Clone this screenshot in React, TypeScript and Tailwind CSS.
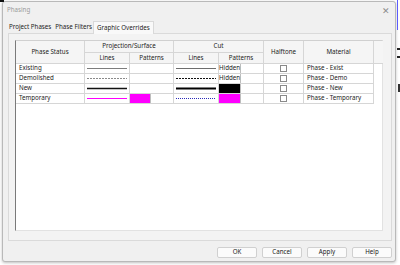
import React from 'react';

type Line = { color: string; width: number; dash?: string };

interface PhaseRow {
  name: string;
  projLine: Line;
  projFill?: string;
  cutLine: Line;
  cutPattern: { text?: string; fill?: string };
  material: string;
}

const rows: PhaseRow[] = [
  {
    name: 'Existing',
    projLine: { color: '#7d7d7d', width: 1 },
    cutLine: { color: '#6e6e6e', width: 1 },
    cutPattern: { text: 'Hidden' },
    material: 'Phase - Exist',
  },
  {
    name: 'Demolished',
    projLine: { color: '#8a8a8a', width: 1, dash: '2 1' },
    cutLine: { color: '#111', width: 1, dash: '2 1' },
    cutPattern: { text: 'Hidden' },
    material: 'Phase - Demo',
  },
  {
    name: 'New',
    projLine: { color: '#111', width: 1.3 },
    cutLine: { color: '#000', width: 2 },
    cutPattern: { fill: '#000' },
    material: 'Phase - New',
  },
  {
    name: 'Temporary',
    projLine: { color: '#ff00ff', width: 1 },
    projFill: '#ff00ff',
    cutLine: { color: '#2b2bb8', width: 1, dash: '1 1' },
    cutPattern: { fill: '#ff00ff' },
    material: 'Phase - Temporary',
  },
];

function LineSample({ line }: { line: Line }) {
  return (
    <svg width="41" height="9" className="block">
      <line x1="0" y1="4.5" x2="41" y2="4.5" stroke={line.color} strokeWidth={line.width} strokeDasharray={line.dash} />
    </svg>
  );
}

const cell = 'border-r border-b border-[#d6d6d6]';
const head = `${cell} bg-[#f5f5f5] flex items-center justify-center text-[#222]`;

export default function App() {
  return (
    <div className="w-[400px] h-[265px] bg-white relative overflow-hidden font-['Noto_Sans',sans-serif] text-[6.2px] leading-none whitespace-nowrap">
      {/* bits of the window behind */}
      <div className="absolute right-[2px] top-0 w-px h-[30px] bg-[#5b5bff]" />
      <div className="absolute right-0 top-[48px] w-[3px] h-[10px] border-y-2 border-[#222]" />
      <div className="absolute right-0 top-[84px] w-[2px] h-[8px] bg-[#333]" />
      <div className="absolute left-0 top-0 w-[4px] h-[2px] bg-[#111]" />

      <div className="ml-[2px] mt-[1px] w-[394px] h-[261px] bg-[#f0f0f0] border border-[#b9b9b9] rounded-[3px] shadow-[0_1px_3px_rgba(0,0,0,0.25)] flex flex-col">
        {/* title bar */}
        <div className="h-[17px] flex items-center justify-between pl-[4px] pr-[5px] text-[#9a9a9a]">
          <span>Phasing</span>
          <span className="text-[9px] font-light text-[#8c8c8c]">✕</span>
        </div>

        {/* tabs */}
        <div className="h-[14px] flex items-end pl-[6px] text-[#222]">
          <div className="h-[12px] pr-[4px] flex items-center">Project Phases</div>
          <div className="h-[12px] pr-[1px] flex items-center">Phase Filters</div>
          <div className="h-[13px] px-[3px] flex items-center bg-[#f9f9f9] border border-b-0 border-[#d9d9d9] relative top-px">
            Graphic Overrides
          </div>
        </div>

        {/* tab panel */}
        <div className="ml-[5px] mr-[3px] h-[208px] border border-[#dadada] bg-[#f3f3f3] pl-[6px] pt-[6px] pr-[8px] pb-[9px]">
          <div className="h-full bg-white border-l border-t border-[#7a7a7a] border-t-[#d0d0d0] border-r border-r-[#e2e2e2] border-b border-b-[#e2e2e2]">
            <div className="grid grid-cols-[69px_45px_44px_45px_45px_40px_70px_9px] grid-rows-[12px_11px_10px_10px_10px_10px] text-[#222]">
              <div className={`${head} row-span-2`}>Phase Status</div>
              <div className={`${head} col-span-2`}>Projection/Surface</div>
              <div className={`${head} col-span-2`}>Cut</div>
              <div className={`${head} row-span-2`}>Halftone</div>
              <div className={`${head} row-span-2`}>Material</div>
              <div className={`${head} row-span-2 border-r-0`} />
              <div className={head}>Lines</div>
              <div className={head}>Patterns</div>
              <div className={head}>Lines</div>
              <div className={head}>Patterns</div>

              {rows.map((r) => (
                <React.Fragment key={r.name}>
                  <div className={`${cell} flex items-center pl-[3px]`}>{r.name}</div>
                  <div className={`${cell} flex items-center px-[2px]`}>
                    <LineSample line={r.projLine} />
                  </div>
                  <div className={`${cell} flex`}>
                    {r.projFill && <div className="w-[21px] h-full border-r border-[#bdbdbd]" style={{ background: r.projFill }} />}
                  </div>
                  <div className={`${cell} flex items-center px-[2px]`}>
                    <LineSample line={r.cutLine} />
                  </div>
                  <div className={`${cell} flex`}>
                    <div
                      className="w-[22px] h-full border-r border-[#bdbdbd] flex items-center"
                      style={r.cutPattern.fill ? { background: r.cutPattern.fill } : undefined}
                    >
                      {r.cutPattern.text}
                    </div>
                  </div>
                  <div className={`${cell} flex items-center justify-center`}>
                    <div className="w-[7px] h-[7px] border border-[#8a8a8a] bg-white" />
                  </div>
                  <div className={`${cell} flex items-center pl-[3px]`}>{r.material}</div>
                  <div />
                </React.Fragment>
              ))}
            </div>
          </div>
        </div>

        {/* buttons */}
        <div className="flex justify-end gap-[5px] pr-[3px] mt-[6px]">
          {['OK', 'Cancel', 'Apply', 'Help'].map((b) => (
            <button
              key={b}
              className="w-[40px] h-[11px] bg-[#fbfbfb] border border-[#d0d0d0] rounded-[2px] text-[6.2px] leading-none text-[#222] flex items-center justify-center"
            >
              {b}
            </button>
          ))}
        </div>
      </div>
    </div>
  );
}
